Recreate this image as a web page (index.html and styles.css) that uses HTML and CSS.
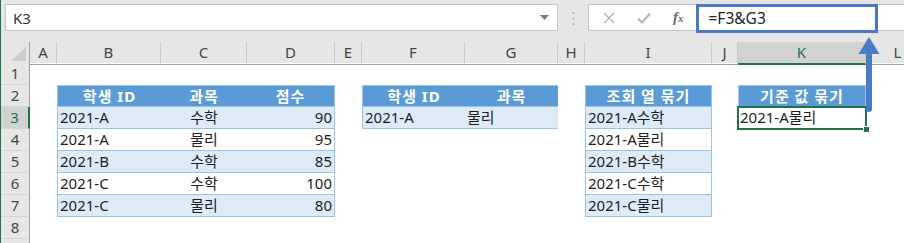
FILE: index.html
```html
<!DOCTYPE html>
<html lang="ko">
<head>
    <meta charset="UTF-8">
    <title>Sheet</title>
    <link rel="stylesheet" href="styles.css">
</head>
<body>
<div class="app">
    <div class="bar">
        <div class="namebox">
            <span>K3</span>
            <svg class="caret" width="9" height="5" viewBox="0 0 9 5"><path d="M0 0h9L4.5 5z" fill="#7a7a7a"/></svg>
        </div>
        <svg class="grip" width="3" height="13" viewBox="0 0 3 13"><rect x="0.5" y="0" width="2" height="2" fill="#b4b4b4"/><rect x="0.5" y="5.5" width="2" height="2" fill="#b4b4b4"/><rect x="0.5" y="11" width="2" height="2" fill="#b4b4b4"/></svg>
        <div class="fbox">
            <svg class="ico" width="12" height="12" viewBox="0 0 12 12"><path d="M1 1l10 10M11 1L1 11" stroke="#b2b2b2" stroke-width="1.4"/></svg>
            <svg class="ico ok" width="14" height="12" viewBox="0 0 14 12"><path d="M1 6.5l4 4L13 1.5" stroke="#b2b2b2" stroke-width="2" fill="none"/></svg>
            <span class="fx">f<small>x</small></span>
            <div class="formula">=F3&amp;G3</div>
        </div>
    </div>

    <div class="sheet">
        <div class="row colhead">
            <div class="corner"><svg width="15" height="14" viewBox="0 0 15 14"><path d="M15 0v14H0z" fill="#cdcdcd"/></svg></div>
            <div>A</div><div>B</div><div>C</div><div>D</div><div>E</div><div>F</div><div>G</div><div>H</div><div>I</div><div>J</div><div class="on">K</div><div>L</div>
        </div>

        <div class="row">
            <div class="rh">1</div>
            <div></div><div></div><div></div><div></div><div></div><div></div><div></div><div></div><div></div><div></div><div></div><div></div>
        </div>

        <div class="row">
            <div class="rh">2</div>
            <div></div>
            <div class="c t th l">학생 ID</div>
            <div class="c t th">과목</div>
            <div class="c t th r">점수</div>
            <div></div>
            <div class="c t th l">학생 ID</div>
            <div class="c t th">과목</div>
            <div></div>
            <div class="c t th l r">조회 열 묶기</div>
            <div></div>
            <div class="c t th l r">기준 값 묶기</div>
            <div></div>
        </div>

        <div class="row">
            <div class="rh on">3</div>
            <div></div>
            <div class="c t b l">2021-A</div>
            <div class="c t b ctr">수학</div>
            <div class="c t b r num">90</div>
            <div></div>
            <div class="c t b l">2021-A</div>
            <div class="c t b">물리</div>
            <div></div>
            <div class="c t b l r">2021-A수학</div>
            <div></div>
            <div class="c sel">2021-A물리</div>
            <div></div>
        </div>

        <div class="row">
            <div class="rh">4</div>
            <div></div>
            <div class="c t l">2021-A</div>
            <div class="c t ctr">물리</div>
            <div class="c t r num">95</div>
            <div></div><div></div><div></div><div></div>
            <div class="c t l r">2021-A물리</div>
            <div></div><div></div><div></div>
        </div>

        <div class="row">
            <div class="rh">5</div>
            <div></div>
            <div class="c t b l">2021-B</div>
            <div class="c t b ctr">수학</div>
            <div class="c t b r num">85</div>
            <div></div><div></div><div></div><div></div>
            <div class="c t b l r">2021-B수학</div>
            <div></div><div></div><div></div>
        </div>

        <div class="row">
            <div class="rh">6</div>
            <div></div>
            <div class="c t l">2021-C</div>
            <div class="c t ctr">수학</div>
            <div class="c t r num">100</div>
            <div></div><div></div><div></div><div></div>
            <div class="c t l r">2021-C수학</div>
            <div></div><div></div><div></div>
        </div>

        <div class="row">
            <div class="rh">7</div>
            <div></div>
            <div class="c t b l">2021-C</div>
            <div class="c t b ctr">물리</div>
            <div class="c t b r num">80</div>
            <div></div><div></div><div></div><div></div>
            <div class="c t b l r">2021-C물리</div>
            <div></div><div></div><div></div>
        </div>

        <div class="row">
            <div class="rh">8</div>
            <div></div><div></div><div></div><div></div><div></div><div></div><div></div><div></div><div></div><div></div><div></div><div></div>
        </div>

        <!-- next row only peeks in at the bottom edge -->
        <div class="row">
            <div class="rh"></div>
            <div></div><div></div><div></div><div></div><div></div><div></div><div></div><div></div><div></div><div></div><div></div><div></div>
        </div>
    </div>

    <!-- callout arrow from K column up to the formula -->
    <svg class="arrow" width="26" height="80" viewBox="0 0 26 80">
        <path d="M13 2L23.5 19h-21z" fill="#4a7bc9"/>
        <rect x="10" y="17" width="6" height="60" rx="3" fill="#4a7bc9"/>
    </svg>
</div>
</body>
</html>
```

FILE: styles.css
```css
body{
    margin: 0;
    font-family: "Noto Sans", "Noto Sans CJK KR", sans-serif;
    font-size: 15px;
    color: #1e1e1e;
}
.app{
    position: relative;
    width: 904px;
    height: 243px;
    overflow: hidden;
    background: #fff;
    border-left: 1px solid #217346;
    box-sizing: border-box;
}

/* formula bar */
.bar{
    height: 42px;
    background: #e6e6e6;
    display: flex;
    align-items: flex-start;
    padding-top: 4px;
    box-sizing: border-box;
}
.namebox{
    margin-left: 4px;
    width: 553px;
    height: 27px;
    background: #fff;
    border: 1px solid #c6c6c6;
    box-sizing: border-box;
    display: flex;
    align-items: center;
    justify-content: space-between;
    padding: 0 8px 0 7px;
    color: #333;
}
.grip{
    margin: 8px 13px 0 14px;
}
.fbox{
    flex: 1;
    height: 27px;
    background: #fff;
    border: 1px solid #c6c6c6;
    border-right: 0;
    box-sizing: border-box;
    display: flex;
    align-items: center;
}
.ico{
    margin-left: 14px;
}
.ok{
    margin-left: 22px;
}
.fx{
    margin-left: 22px;
    font-family: "Liberation Serif", serif;
    font-style: italic;
    font-weight: bold;
    font-size: 15px;
    color: #6b6b6b;
}
.fx small{
    font-size: 11px;
}
.formula{
    align-self: flex-start;
    margin: -1px 0 0 12px;
    width: 182px;
    height: 29px;
    border: 3px solid #4a78c6;
    box-sizing: border-box;
    padding-left: 10px;
    line-height: 22px;
    font-size: 15.5px;
    color: #222;
}

/* grid */
.row{
    display: grid;
    grid-template-columns: 29px 27px 104px 86px 88px 27px 103px 93px 27px 127px 26px 128px 64px;
    height: 22px;
}
.colhead{
    height: 21px;
    background: #e6e6e6;
}
.colhead div{
    border-right: 1px solid #cacaca;
    border-bottom: 1px solid #a0a0a0;
    text-align: center;
    line-height: 21px;
    color: #444;
}
.colhead .corner{
    display: flex;
    align-items: flex-end;
    justify-content: flex-end;
    padding: 0 3px 3px 0;
    border-right: 1px solid #a0a0a0;
}
.colhead .on{
    background: #d2d2d2;
    border-bottom: 2px solid #217346;
    color: #217346;
}
.rh{
    background: #e6e6e6;
    border-right: 1px solid #a0a0a0;
    border-bottom: 1px solid #d4d4d4;
    text-align: center;
    line-height: 21px;
    color: #444;
}
.rh.on{
    background: #d2d2d2;
    border-right: 2px solid #217346;
    color: #217346;
}

/* cells */
.c{
    padding: 0 2px;
    white-space: nowrap;
    overflow: hidden;
    line-height: 21px;
    box-sizing: border-box;
}
.t{
    border-bottom: 1px solid #9bc2e6;
}
.th{
    background: #5b9bd5;
    color: #fff;
    font-weight: bold;
    text-align: center;
    letter-spacing: 1px;
    border-top: 1px solid #9bc2e6;
    line-height: 20px;
}
.b{
    background: #ddebf7;
}
.l{
    border-left: 1px solid #9bc2e6;
}
.r{
    border-right: 1px solid #9bc2e6;
}
.ctr{
    text-align: center;
}
.num{
    text-align: right;
}
.sel{
    position: relative;
    overflow: visible;
}
.sel::after{
    content: "";
    position: absolute;
    left: -1px;
    top: -1px;
    right: -1px;
    bottom: -1px;
    border: 2px solid #217346;
}
.sel::before{
    content: "";
    position: absolute;
    right: -4px;
    bottom: -4px;
    width: 5px;
    height: 5px;
    background: #217346;
    border: 1px solid #fff;
    z-index: 1;
}

.arrow{
    position: absolute;
    left: 855px;
    top: 35px;
}
```
